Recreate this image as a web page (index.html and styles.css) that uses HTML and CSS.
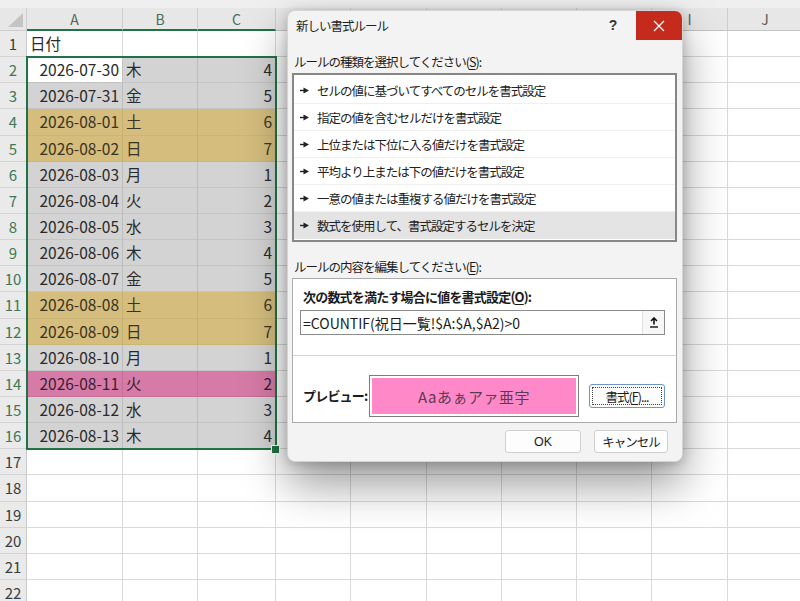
FILE: index.html
```html
<!DOCTYPE html>
<html lang="ja">
<head>
<meta charset="utf-8">
<title>新しい書式ルール</title>
<link rel="stylesheet" href="styles.css">
</head>
<body>
<div class="sheet">
  <div class="topband"></div>
  <div class="r hdr">
    <div class="corner"><svg width="27" height="23" viewBox="0 0 27 23"><polygon points="23,5 23,19 8,19" fill="#c4c4c4"/></svg></div>
    <div class="ch sel">A</div><div class="ch sel">B</div><div class="ch sel">C</div><div class="ch"></div><div class="ch"></div><div class="ch"></div><div class="ch"></div><div class="ch"></div><div class="ch">I</div><div class="ch">J</div>
  </div>
  <div class="r"><div class="rh">1</div><div class="c">日付</div><div class="c"></div><div class="c"></div><div class="c"></div><div class="c"></div><div class="c"></div><div class="c"></div><div class="c"></div><div class="c"></div><div class="c"></div></div>
  <div class="r"><div class="rh sel">2</div><div class="c n w">2026-07-30</div><div class="c g">木</div><div class="c n g">4</div><div class="c"></div><div class="c"></div><div class="c"></div><div class="c"></div><div class="c"></div><div class="c"></div><div class="c"></div></div>
  <div class="r"><div class="rh sel">3</div><div class="c n g">2026-07-31</div><div class="c g">金</div><div class="c n g">5</div><div class="c"></div><div class="c"></div><div class="c"></div><div class="c"></div><div class="c"></div><div class="c"></div><div class="c"></div></div>
  <div class="r"><div class="rh sel">4</div><div class="c n y">2026-08-01</div><div class="c y">土</div><div class="c n y">6</div><div class="c"></div><div class="c"></div><div class="c"></div><div class="c"></div><div class="c"></div><div class="c"></div><div class="c"></div></div>
  <div class="r"><div class="rh sel">5</div><div class="c n y">2026-08-02</div><div class="c y">日</div><div class="c n y">7</div><div class="c"></div><div class="c"></div><div class="c"></div><div class="c"></div><div class="c"></div><div class="c"></div><div class="c"></div></div>
  <div class="r"><div class="rh sel">6</div><div class="c n g">2026-08-03</div><div class="c g">月</div><div class="c n g">1</div><div class="c"></div><div class="c"></div><div class="c"></div><div class="c"></div><div class="c"></div><div class="c"></div><div class="c"></div></div>
  <div class="r"><div class="rh sel">7</div><div class="c n g">2026-08-04</div><div class="c g">火</div><div class="c n g">2</div><div class="c"></div><div class="c"></div><div class="c"></div><div class="c"></div><div class="c"></div><div class="c"></div><div class="c"></div></div>
  <div class="r"><div class="rh sel">8</div><div class="c n g">2026-08-05</div><div class="c g">水</div><div class="c n g">3</div><div class="c"></div><div class="c"></div><div class="c"></div><div class="c"></div><div class="c"></div><div class="c"></div><div class="c"></div></div>
  <div class="r"><div class="rh sel">9</div><div class="c n g">2026-08-06</div><div class="c g">木</div><div class="c n g">4</div><div class="c"></div><div class="c"></div><div class="c"></div><div class="c"></div><div class="c"></div><div class="c"></div><div class="c"></div></div>
  <div class="r"><div class="rh sel">10</div><div class="c n g">2026-08-07</div><div class="c g">金</div><div class="c n g">5</div><div class="c"></div><div class="c"></div><div class="c"></div><div class="c"></div><div class="c"></div><div class="c"></div><div class="c"></div></div>
  <div class="r"><div class="rh sel">11</div><div class="c n y">2026-08-08</div><div class="c y">土</div><div class="c n y">6</div><div class="c"></div><div class="c"></div><div class="c"></div><div class="c"></div><div class="c"></div><div class="c"></div><div class="c"></div></div>
  <div class="r"><div class="rh sel">12</div><div class="c n y">2026-08-09</div><div class="c y">日</div><div class="c n y">7</div><div class="c"></div><div class="c"></div><div class="c"></div><div class="c"></div><div class="c"></div><div class="c"></div><div class="c"></div></div>
  <div class="r"><div class="rh sel">13</div><div class="c n g">2026-08-10</div><div class="c g">月</div><div class="c n g">1</div><div class="c"></div><div class="c"></div><div class="c"></div><div class="c"></div><div class="c"></div><div class="c"></div><div class="c"></div></div>
  <div class="r"><div class="rh sel">14</div><div class="c n p">2026-08-11</div><div class="c p">火</div><div class="c n p">2</div><div class="c"></div><div class="c"></div><div class="c"></div><div class="c"></div><div class="c"></div><div class="c"></div><div class="c"></div></div>
  <div class="r"><div class="rh sel">15</div><div class="c n g">2026-08-12</div><div class="c g">水</div><div class="c n g">3</div><div class="c"></div><div class="c"></div><div class="c"></div><div class="c"></div><div class="c"></div><div class="c"></div><div class="c"></div></div>
  <div class="r"><div class="rh sel">16</div><div class="c n g">2026-08-13</div><div class="c g">木</div><div class="c n g">4</div><div class="c"></div><div class="c"></div><div class="c"></div><div class="c"></div><div class="c"></div><div class="c"></div><div class="c"></div></div>
  <div class="r"><div class="rh">17</div><div class="c"></div><div class="c"></div><div class="c"></div><div class="c"></div><div class="c"></div><div class="c"></div><div class="c"></div><div class="c"></div><div class="c"></div><div class="c"></div></div>
  <div class="r"><div class="rh">18</div><div class="c"></div><div class="c"></div><div class="c"></div><div class="c"></div><div class="c"></div><div class="c"></div><div class="c"></div><div class="c"></div><div class="c"></div><div class="c"></div></div>
  <div class="r"><div class="rh">19</div><div class="c"></div><div class="c"></div><div class="c"></div><div class="c"></div><div class="c"></div><div class="c"></div><div class="c"></div><div class="c"></div><div class="c"></div><div class="c"></div></div>
  <div class="r"><div class="rh">20</div><div class="c"></div><div class="c"></div><div class="c"></div><div class="c"></div><div class="c"></div><div class="c"></div><div class="c"></div><div class="c"></div><div class="c"></div><div class="c"></div></div>
  <div class="r"><div class="rh">21</div><div class="c"></div><div class="c"></div><div class="c"></div><div class="c"></div><div class="c"></div><div class="c"></div><div class="c"></div><div class="c"></div><div class="c"></div><div class="c"></div></div>
  <div class="r"><div class="rh">22</div><div class="c"></div><div class="c"></div><div class="c"></div><div class="c"></div><div class="c"></div><div class="c"></div><div class="c"></div><div class="c"></div><div class="c"></div><div class="c"></div></div>
  <div class="selection"></div>
  <div class="handle"></div>
</div>

<div class="dialog">
  <div class="titlebar">
    <div class="title">新しい書式ルール</div>
    <div class="help">?</div>
    <div class="close"><svg width="12" height="12" viewBox="0 0 12 12"><path d="M1 1L11 11M11 1L1 11" stroke="#fff" stroke-width="1.3" fill="none"/></svg></div>
  </div>
  <div class="dbody">
    <div class="lbl first">ルールの種類を選択してください(<u>S</u>):</div>
    <div class="listbox">
      <div class="item"><svg class="arr" width="9" height="7" viewBox="0 0 9 7"><path d="M0 3.5H4" stroke="#222" stroke-width="1.4"/><polygon points="3.5,0.5 9,3.5 3.5,6.5" fill="#222"/></svg><span>セルの値に基づいてすべてのセルを書式設定</span></div>
      <div class="item"><svg class="arr" width="9" height="7" viewBox="0 0 9 7"><path d="M0 3.5H4" stroke="#222" stroke-width="1.4"/><polygon points="3.5,0.5 9,3.5 3.5,6.5" fill="#222"/></svg><span>指定の値を含むセルだけを書式設定</span></div>
      <div class="item"><svg class="arr" width="9" height="7" viewBox="0 0 9 7"><path d="M0 3.5H4" stroke="#222" stroke-width="1.4"/><polygon points="3.5,0.5 9,3.5 3.5,6.5" fill="#222"/></svg><span>上位または下位に入る値だけを書式設定</span></div>
      <div class="item"><svg class="arr" width="9" height="7" viewBox="0 0 9 7"><path d="M0 3.5H4" stroke="#222" stroke-width="1.4"/><polygon points="3.5,0.5 9,3.5 3.5,6.5" fill="#222"/></svg><span>平均より上または下の値だけを書式設定</span></div>
      <div class="item"><svg class="arr" width="9" height="7" viewBox="0 0 9 7"><path d="M0 3.5H4" stroke="#222" stroke-width="1.4"/><polygon points="3.5,0.5 9,3.5 3.5,6.5" fill="#222"/></svg><span>一意の値または重複する値だけを書式設定</span></div>
      <div class="item active"><svg class="arr" width="9" height="7" viewBox="0 0 9 7"><path d="M0 3.5H4" stroke="#222" stroke-width="1.4"/><polygon points="3.5,0.5 9,3.5 3.5,6.5" fill="#222"/></svg><span>数式を使用して、書式設定するセルを決定</span></div>
    </div>
    <div class="lbl second">ルールの内容を編集してください(<u>E</u>):</div>
    <div class="panel">
      <div class="blbl">次の数式を満たす場合に値を書式設定(<u>O</u>):</div>
      <div class="formula">
        <span class="ftext">=COUNTIF(祝日一覧!$A:$A,$A2)&gt;0</span>
        <span class="collapse"><svg width="10" height="11" viewBox="0 0 10 11"><path d="M5 1V7.5M2 4L5 1L8 4" stroke="#111" stroke-width="1.6" fill="none"/><path d="M1 10H9" stroke="#111" stroke-width="1.4"/></svg></span>
      </div>
      <div class="sep"></div>
      <div class="prevrow">
        <div class="blbl plbl">プレビュー:</div>
        <div class="preview"><div class="pinner">Aaあぁアァ亜宇</div></div>
        <div class="btn fmt"><span class="focus">書式(<u>F</u>)...</span></div>
      </div>
    </div>
    <div class="btnrow">
      <div class="btn ok">OK</div>
      <div class="btn cancel">キャンセル</div>
    </div>
  </div>
</div>
</body>
</html>
```
FILE: styles.css
```css
html, body {
  margin: 0;
  padding: 0;
}
body {
  width: 800px;
  height: 601px;
  overflow: hidden;
  background: #ffffff;
  font-family: "Noto Sans CJK JP", "Noto Sans", sans-serif;
  position: relative;
}

/* ---------- sheet ---------- */
.sheet {
  position: relative;
  width: 800px;
}
.topband {
  height: 8px;
  background: #efefef;
}
.r {
  display: grid;
  grid-template-columns: 27px 96px 75px 78px 75px 76px 75px 75px 75px 76px 75px;
  height: 26.15px;
}
.r > div {
  box-sizing: border-box;
}
.hdr {
  height: 23px;
  background: #e7e7e7;
}
.corner {
  border-right: 1px solid #cdcdcd;
  border-bottom: 1px solid #cdcdcd;
  height: 23px;
}
.corner svg {
  display: block;
}
.ch {
  height: 23px;
  border-right: 1px solid #cdcdcd;
  border-bottom: 1px solid #c4c4c4;
  text-align: center;
  font-size: 14px;
  line-height: 22px;
  color: #5a5a5a;
}
.ch.sel {
  border-bottom: 2px solid #217346;
  color: #4d6b5a;
}
.rh {
  background: #eaeaea;
  border-right: 1px solid #c9c9c9;
  border-bottom: 1px solid #d3d3d3;
  text-align: center;
  font-size: 15px;
  line-height: 25px;
  color: #3c3c3c;
}
.rh.sel {
  color: #3f7757;
}
.c {
  border-right: 1px solid #d9d9d9;
  border-bottom: 1px solid #d9d9d9;
  font-size: 15.5px;
  line-height: 25px;
  color: #2a2a2a;
  padding: 0 3px;
  white-space: nowrap;
  overflow: hidden;
}
.n {
  text-align: right;
}
.w {
  background: #ffffff;
  border-right-color: #c2c2c2;
  border-bottom-color: #c2c2c2;
}
.g {
  background: #d3d3d3;
  border-right-color: #bdbdbd;
  border-bottom-color: #c4c4c4;
}
.y {
  background: #d4bd7d;
  border-right-color: #c7b172;
  border-bottom-color: #cbb576;
  color: #3b3322;
}
.p {
  background: #d67ba7;
  border-right-color: #c56f99;
  border-bottom-color: #c56f99;
  color: #3a2030;
}
.selection {
  position: absolute;
  left: 26px;
  top: 56px;
  width: 251px;
  height: 394px;
  box-sizing: border-box;
  border: 2px solid #217346;
}
.handle {
  position: absolute;
  left: 272px;
  top: 446px;
  width: 7px;
  height: 7px;
  box-sizing: border-box;
  background: #217346;
  outline: 1px solid #ffffff;
}

/* ---------- dialog ---------- */
.dialog {
  position: absolute;
  left: 287px;
  top: 10px;
  width: 396px;
  height: 452px;
  box-sizing: border-box;
  background: #f3f3f3;
  border-radius: 8px;
  border: 1px solid #d4d4d4;
  box-shadow: 0 22px 45px rgba(0, 0, 0, 0.4), 0 2px 12px rgba(0, 0, 0, 0.2);
  color: #1b1b1b;
  font-size: 12.5px;
  letter-spacing: -1px;
}
.titlebar {
  display: flex;
  height: 29px;
  align-items: stretch;
}
.title {
  flex: 1;
  padding-left: 8px;
  line-height: 29px;
  font-size: 12.5px;
  color: #1f1f1f;
}
.help {
  width: 46px;
  text-align: center;
  line-height: 29px;
  font-size: 14px;
  font-weight: bold;
  color: #333;
  letter-spacing: 0;
  font-family: "Liberation Sans", sans-serif;
}
.close {
  width: 46px;
  background: #c42b1c;
  border-top-right-radius: 7px;
  display: flex;
  align-items: center;
  justify-content: center;
}
.dbody {
  padding: 0 5px 0 4px;
  display: flex;
  flex-direction: column;
}
.lbl {
  height: 16px;
  line-height: 16px;
  padding-left: 2px;
  white-space: nowrap;
}
.lbl.first {
  margin-top: 14px;
}
.lbl.second {
  margin-top: 17px;
}
u {
  text-decoration: underline;
  text-underline-offset: 2px;
}
.listbox {
  margin-top: 3px;
  height: 169px;
  box-sizing: border-box;
  border: 2px solid #878787;
  background: #ffffff;
  padding-top: 2px;
}
.item {
  height: 27px;
  box-sizing: border-box;
  border-bottom: 1px solid #efefef;
  display: flex;
  align-items: center;
  padding-left: 6px;
  gap: 8px;
  color: #222;
  white-space: nowrap;
}
.item.active {
  background: #e4e4e4;
  border-bottom: none;
}
.arr {
  flex: none;
}
.panel {
  margin-top: 3px;
  height: 145px;
  box-sizing: border-box;
  background: #ffffff;
  border: 1px solid #ababab;
  padding: 10px 11px 0 7px;
}
.blbl {
  font-weight: bold;
  font-size: 13px;
  letter-spacing: -0.8px;
  height: 16px;
  line-height: 16px;
  padding-left: 3px;
  color: #1b1b1b;
  white-space: nowrap;
}
.formula {
  margin-top: 5px;
  height: 25px;
  box-sizing: border-box;
  border: 1px solid #8a8a8a;
  display: flex;
  align-items: center;
  justify-content: space-between;
  padding-left: 2px;
}
.ftext {
  font-size: 14px;
  letter-spacing: 0;
  color: #1b1b1b;
}
.collapse {
  width: 22px;
  height: 23px;
  box-sizing: border-box;
  border-left: 1px solid #e0e0e0;
  background: #f7f7f7;
  display: flex;
  align-items: center;
  justify-content: center;
}
.sep {
  margin: 20px -11px 0 -7px;
  height: 1px;
  background: #d2d2d2;
}
.prevrow {
  margin-top: 19px;
  display: flex;
  align-items: center;
}
.plbl {
  width: 66px;
  flex: none;
}
.preview {
  width: 210px;
  height: 42px;
  flex: none;
  box-sizing: border-box;
  border: 1px solid #7d7d7d;
  padding: 2px;
  background: #ffffff;
}
.pinner {
  height: 100%;
  background: #ff89c8;
  display: flex;
  align-items: center;
  justify-content: center;
  font-size: 15px;
  color: #5b3a52;
  letter-spacing: 0.5px;
}
.btn {
  box-sizing: border-box;
  height: 24px;
  background: #fdfdfd;
  border: 1px solid #d0d0d0;
  border-radius: 3px;
  display: flex;
  align-items: center;
  justify-content: center;
  color: #1b1b1b;
  white-space: nowrap;
}
.fmt {
  width: 76px;
  flex: none;
  margin-left: 10px;
  border: 1px solid #6e95c7;
  padding: 2px;
}
.focus {
  flex: 1;
  height: 100%;
  box-sizing: border-box;
  border: 1px dotted #444;
  display: flex;
  align-items: center;
  justify-content: center;
}
.btnrow {
  margin-top: 7px;
  display: flex;
  justify-content: flex-end;
  gap: 13px;
  padding-right: 9px;
}
.ok {
  width: 76px;
  height: 23px;
  letter-spacing: 0;
  font-family: "Liberation Sans", sans-serif;
}
.cancel {
  width: 74px;
  height: 23px;
}
```
